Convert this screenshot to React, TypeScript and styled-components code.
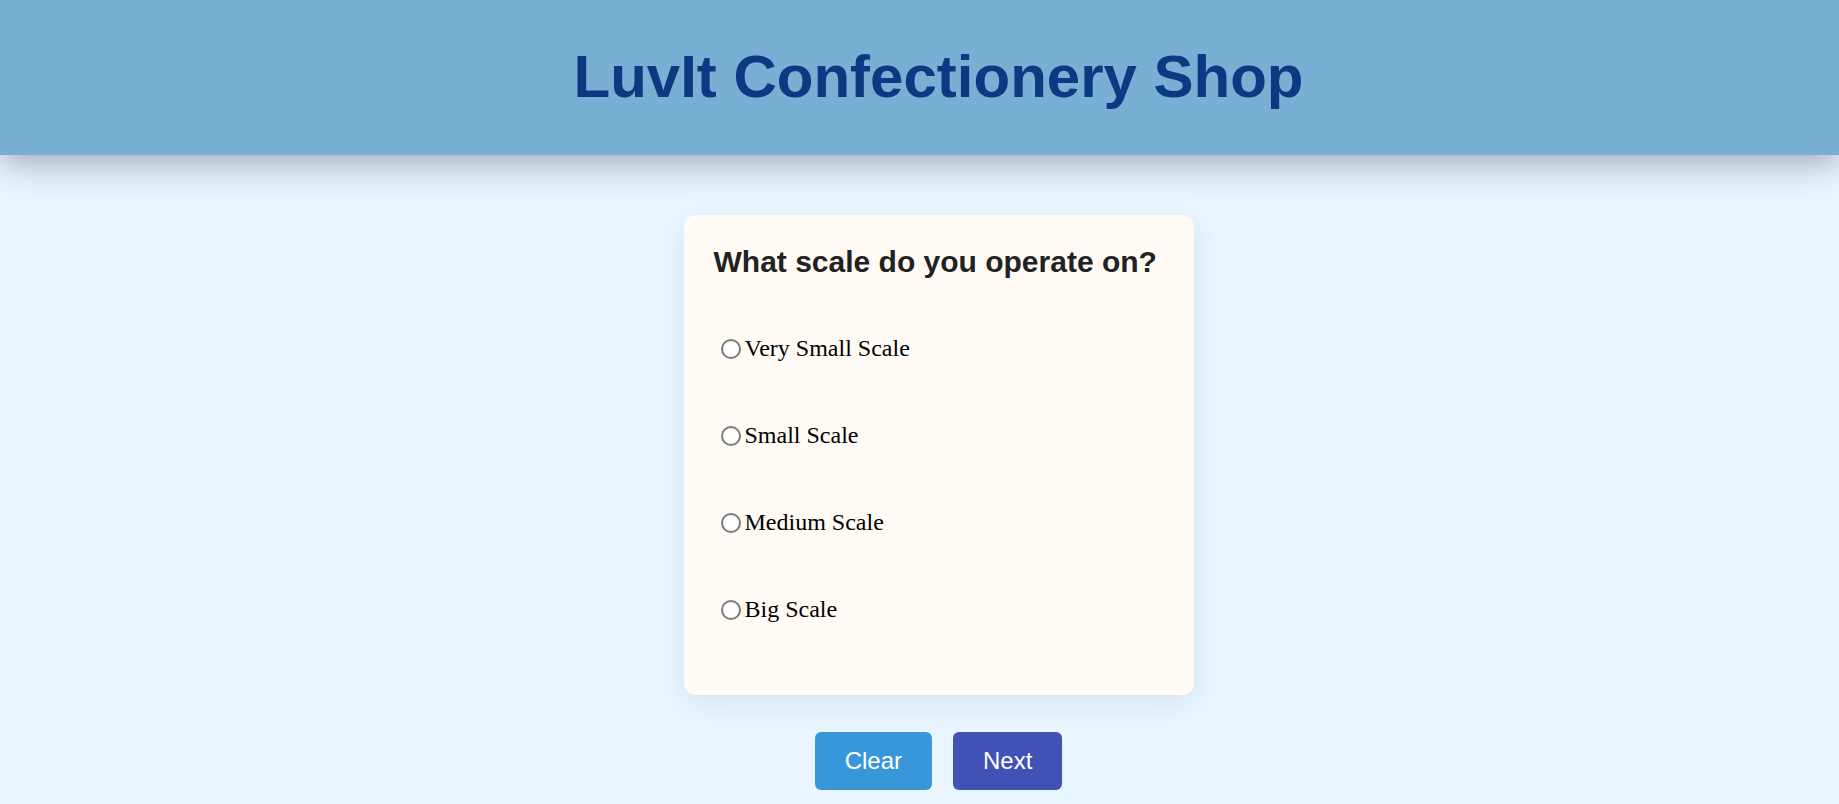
import React from 'react';
import styled, { createGlobalStyle } from 'styled-components';

const GlobalStyle = createGlobalStyle`
  html, body {
    margin: 0;
    padding: 0;
    background-color: #eaf6ff;
    font-family: "Liberation Serif", "Times New Roman", serif;
  }
`;

const Header = styled.header`
  height: 155px;
  padding-left: 38px;
  padding-bottom: 3px;
  box-sizing: border-box;
  background-color: #77afd5;
  box-shadow: 0 6px 34px rgba(30, 45, 55, 0.42);
  display: flex;
  align-items: center;
  justify-content: center;
  position: relative;
  z-index: 1;
`;

const Title = styled.h1`
  margin: 0;
  font-family: "Liberation Sans", Arial, sans-serif;
  font-size: 60px;
  font-weight: bold;
  color: #0b3a83;
`;

const Main = styled.main`
  padding-left: 38px;
  display: flex;
  flex-direction: column;
  align-items: center;
`;

const Card = styled.section`
  margin-top: 60px;
  width: 510px;
  box-sizing: border-box;
  padding: 30px 30px 72px;
  background-color: #fffbf4;
  border-radius: 12px;
  box-shadow: 0 8px 30px rgba(60, 110, 150, 0.14);
`;

const Question = styled.h2`
  margin: 0;
  font-family: "Liberation Sans", Arial, sans-serif;
  font-size: 30px;
  font-weight: bold;
  color: #222;
`;

const Options = styled.div`
  margin-top: 56px;
  display: flex;
  flex-direction: column;
  gap: 60px;
`;

const Option = styled.label`
  display: flex;
  align-items: center;
  font-size: 24px;
  color: #000;
  cursor: pointer;
`;

const Radio = styled.input`
  appearance: none;
  width: 20px;
  height: 20px;
  margin: 0 4px 0 7px;
  border: 2px solid #7a7a7a;
  border-radius: 50%;
  background: #fff;
  box-sizing: border-box;
  cursor: pointer;

  &:checked {
    border-color: #0b57d0;
    background: radial-gradient(circle, #0b57d0 40%, #fff 45%);
  }
`;

const Actions = styled.div`
  margin-top: 37px;
  display: flex;
  gap: 21px;
`;

const Button = styled.button<{ $bg: string }>`
  height: 58px;
  padding: 0 30px;
  border: none;
  border-radius: 6px;
  background-color: ${({ $bg }) => $bg};
  color: #fff;
  font-family: "Liberation Sans", Arial, sans-serif;
  font-size: 24px;
  cursor: pointer;
`;

const scales = ['Very Small Scale', 'Small Scale', 'Medium Scale', 'Big Scale'];

export default function App() {
  const [picked, setPicked] = React.useState<string | null>(null);

  return (
    <>
      <GlobalStyle />
      <Header>
        <Title>LuvIt Confectionery Shop</Title>
      </Header>
      <Main>
        <Card>
          <Question>What scale do you operate on?</Question>
          <Options>
            {scales.map((s) => (
              <Option key={s}>
                <Radio
                  type="radio"
                  name="scale"
                  checked={picked === s}
                  onChange={() => setPicked(s)}
                />
                {s}
              </Option>
            ))}
          </Options>
        </Card>
        <Actions>
          <Button $bg="#3897d8" onClick={() => setPicked(null)}>Clear</Button>
          <Button $bg="#4151b6">Next</Button>
        </Actions>
      </Main>
    </>
  );
}
